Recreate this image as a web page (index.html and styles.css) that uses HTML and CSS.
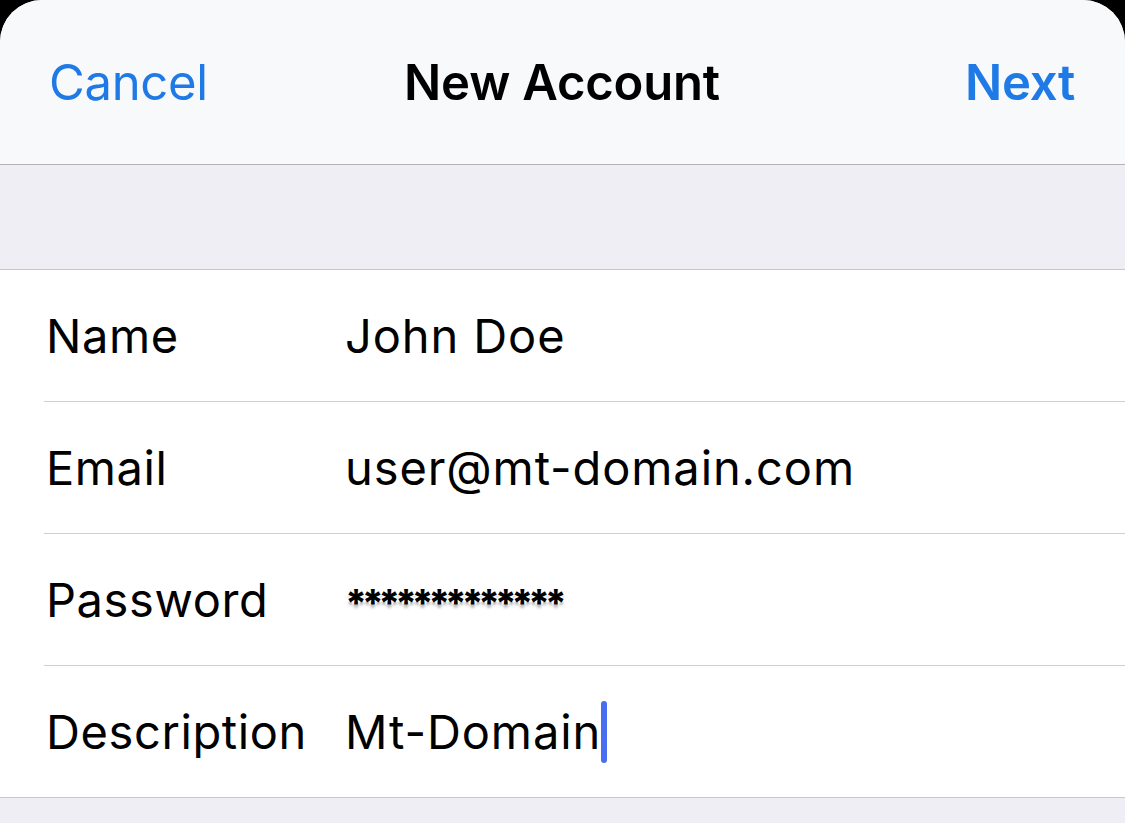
FILE: index.html
```html
<!DOCTYPE html>
<html lang="en">
<head>
    <meta charset="UTF-8">
    <meta name="viewport" content="width=device-width, initial-scale=1.0">
    <title>New Account</title>
    <link rel="stylesheet" href="styles.css">
</head>
<body>
    <div class="sheet">
        <div class="navbar">
            <span class="nav-btn">Cancel</span>
            <span class="nav-title">New Account</span>
            <span class="nav-btn right">Next</span>
        </div>

        <div class="spacer"></div>

        <div class="form">
            <div class="row">
                <span class="label">Name</span>
                <span class="value">John Doe</span>
            </div>
            <div class="row">
                <span class="label">Email</span>
                <span class="value">user@mt-domain.com</span>
            </div>
            <div class="row">
                <span class="label">Password</span>
                <span class="value secret">*************</span>
            </div>
            <div class="row">
                <span class="label">Description</span>
                <span class="value">Mt-Domain<span class="caret"></span></span>
            </div>
        </div>

        <div class="footer"></div>
    </div>
</body>
</html>
```

FILE: styles.css
```css
/* Global */
body {
    margin: 0;
    background: #000;
    font-family: 'Inter', 'Noto Sans', sans-serif;
    color: #000;
    height: 823px;
    overflow: hidden;
}

.sheet {
    background: #f0eef5;
    border-radius: 42px 42px 0 0;
    overflow: hidden;
    height: 100%;
}

/* Top bar */
.navbar {
    height: 165px;
    background: #f8f9fb;
    border-bottom: 1px solid #b3b3b6;
    display: flex;
    align-items: center;
    padding: 0 50px 0 49px;
    box-sizing: border-box;
}

.nav-btn {
    flex: 1;
    color: #1f7ae6;
    font-size: 49px;
    letter-spacing: -0.3px;
}

.nav-btn.right {
    text-align: right;
    font-weight: 600;
}

.nav-title {
    font-size: 49px;
    font-weight: 600;
    letter-spacing: -0.2px;
}

.spacer {
    height: 104px;
    border-bottom: 1px solid #c8c7cc;
}

/* Form rows */
.form {
    background: #fff;
    padding-left: 44px;
    border-bottom: 1px solid #c8c7cc;
}

.row {
    height: 131px;
    display: flex;
    align-items: center;
    border-bottom: 1px solid #d0d0d4;
}

.row:last-child {
    border-bottom: none;
}

.label {
    width: 299px;
    padding-left: 2px;
    font-size: 47px;
    letter-spacing: 0.6px;
}

.value {
    font-size: 47px;
    letter-spacing: 0.9px;
}

.secret {
    font-size: 38px;
    font-weight: 800;
    letter-spacing: -5.5px;
    padding-top: 6px;
    text-shadow: 2px 0 1px #fff, -2px 0 1px #fff, 0 -2px 1px #fff,
                 0 3px 3px rgba(0, 0, 0, 0.35);
}

.caret {
    display: inline-block;
    width: 6px;
    height: 62px;
    background: #4a6ef0;
    border-radius: 3px;
    vertical-align: -14px;
    margin-left: 0;
}

.footer {
    height: 30px;
}
```
